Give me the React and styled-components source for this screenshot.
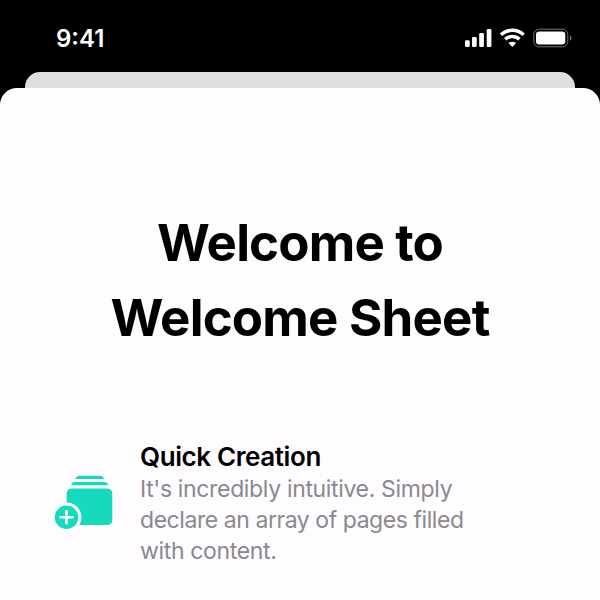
import React from 'react';
import styled, { createGlobalStyle } from 'styled-components';

const GlobalStyle = createGlobalStyle`
  * { box-sizing: border-box; }
  body { margin: 0; background: #000; font-family: Inter, "Liberation Sans", sans-serif; }
`;
const Screen = styled.main`
  width: 600px; height: 600px; overflow: hidden; background: #000;
  display: flex; flex-direction: column;
`;
const StatusBar = styled.header`
  height: 72px; flex: none; display: flex; justify-content: space-between; align-items: center;
  padding: 4px 28px 0 56px; color: #fff;
`;
const Time = styled.time`
  font-size: 24px; font-weight: 560; line-height: 28px; padding-top: 1px; white-space: nowrap;
`;
const Indicators = styled.svg`
  display: block; width: 108px; height: 20px; flex: none;
`;
const BackSheet = styled.div`
  height: 32px; flex: none; margin: 0 25px -16px; border-radius: 15px 15px 0 0; background: #e0dde0;
`;
const Sheet = styled.section`
  flex: 1; position: relative; border-radius: 17px 17px 0 0; background: #fefcff; padding-top: 117px;
`;
const Title = styled.h1`
  margin: 0; display: flex; flex-direction: column; align-items: center;
  font-size: 51px; line-height: 75px; font-weight: 700; color: #000; white-space: nowrap;
`;
const Line = styled.span`
  letter-spacing: ${p => p.$spacing};
`;
const Feature = styled.article`
  display: flex; margin-top: 86px; padding-left: 54px;
`;
const FeatureIcon = styled.svg`
  width: 60px; height: 56px; margin: 34px 26px 0 0; flex: none;
`;
const FeatureTitle = styled.h2`
  margin: 0 0 1px; font-size: 26px; line-height: 32px; font-weight: 600; letter-spacing: ${p => p.$spacing}; color: #000;
`;
const Description = styled.p`
  margin: 0; display: flex; flex-direction: column; font-size: 23px; line-height: 31px; color: #8a898d; white-space: nowrap;
`;

export default function App() {
  return (
    <Screen>
      <GlobalStyle />
      <StatusBar>
        <Time>9:41</Time>
        <Indicators viewBox="0 0 108 20" fill="#fff">
          <rect x="1" y="12.3" width="4.7" height="6.7" rx="1.3"/>
          <rect x="8" y="9" width="4.7" height="10" rx="1.3"/>
          <rect x="15.2" y="5" width="4.7" height="14" rx="1.3"/>
          <rect x="22.7" y="1" width="4.7" height="18" rx="1.3"/>
          <g fill="none" stroke="#fff" strokeWidth="3.5">
            <path d="M37 6.8A16.5 16.5 0 0 1 59.6 6.8"/>
            <path d="M41.2 11.3A10.3 10.3 0 0 1 55.4 11.3"/>
          </g>
          <path d="M48.3 19L44.5 15.1Q48.3 12.2 52.1 15.1Z"/>
          <rect x="69.8" y="1.2" width="34" height="17.6" rx="5.4" fill="none" stroke="#777"/>
          <rect x="72" y="3.6" width="29.3" height="12.8" rx="3.2"/>
          <path d="M106 7.2Q109.2 10 106 12.8Z" fill="#777"/>
        </Indicators>
      </StatusBar>
      <BackSheet />
      <Sheet>
        <Title><Line $spacing="-0.85px">Welcome to</Line><Line $spacing="-0.8px">Welcome Sheet</Line></Title>
        <Feature>
          <FeatureIcon viewBox="0 0 60 56" fill="#16dabd">
            <path d="M21.5 4Q22.5 .8 25.5 .8H46Q49 .8 50 4Z"/>
            <path d="M17 10.3Q18 7 21 7H50.3Q53.3 7 54.3 10.3Z"/>
            <path d="M18 13.5H53Q58.3 13.5 58.3 18.8V44.7Q58.3 50 53 50H25.2A14.9 14.9 0 0 0 12.7 27.4V18.8Q12.7 13.5 18 13.5Z"/>
            <circle cx="12.5" cy="42.3" r="11.7"/>
            <path d="M12.5 36.3V48.3M6.5 42.3H18.5" stroke="#fff" strokeWidth="2.6" strokeLinecap="round"/>
          </FeatureIcon>
          <div>
            <FeatureTitle $spacing="-0.4px">Quick Creation</FeatureTitle>
            <Description>
              <Line $spacing="-0.34px">It's incredibly intuitive. Simply</Line>
              <Line $spacing="-0.44px">declare an array of pages filled</Line>
              <Line $spacing="-0.34px">with content.</Line>
            </Description>
          </div>
        </Feature>
      </Sheet>
    </Screen>
  );
}
